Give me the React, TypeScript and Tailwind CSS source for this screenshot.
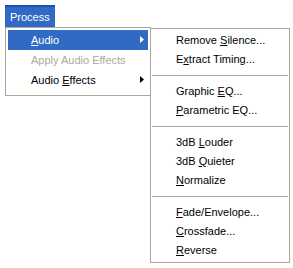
import React from "react";

const font = { fontFamily: '"Liberation Sans", Arial, sans-serif' };

function U({ children }: { children: React.ReactNode }) {
    return <span className="underline underline-offset-[1px]">{children}</span>;
}

function Arrow({ color }: { color: string }) {
    return (
        <svg width="4" height="7" viewBox="0 0 4 7" className="absolute right-[4px] top-[6px]">
            <path d="M0 0 L4 3.5 L0 7 Z" fill={color} />
        </svg>
    );
}

function Sep() {
    return (
        <div className="py-[6px] px-[1px]">
            <div className="h-px bg-[#aca899]"></div>
        </div>
    );
}

function Item({ children }: { children: React.ReactNode }) {
    return <div className="h-[19px] leading-[19px] pl-[25px] text-black">{children}</div>;
}

export default function App() {
    return (
        <div className="relative w-[293px] h-[268px] bg-white text-[11px]" style={font}>
            {/* menu bar */}
            <div className="pl-[5px] pt-[5px] flex">
                <div className="h-[22px] px-[5px] leading-[20px] bg-[#316ac5] border-t-2 border-[#1c4fb0] text-white">
                    Process
                </div>
            </div>

            {/* Process dropdown */}
            <div className="absolute left-[5px] top-[27px] w-[146px] h-[69px] bg-white border border-[#aca899] p-[2px]">
                <div className="relative h-[20px] leading-[20px] pl-[23px] bg-[#316ac5] text-white">
                    <U>A</U>udio
                    <Arrow color="#fff" />
                </div>
                <div className="h-[20px] leading-[20px] pl-[23px] text-[#aca899]">
                    Apply Audio Effects
                </div>
                <div className="relative h-[20px] leading-[20px] pl-[23px] text-black">
                    Audio <U>E</U>ffects
                    <Arrow color="#000" />
                </div>
            </div>

            {/* Audio submenu */}
            <div className="absolute left-[150px] top-[28px] w-[140px] h-[235px] bg-white border border-[#aca899] pt-[2px]">
                <Item>Remove <U>S</U>ilence...</Item>
                <Item>E<U>x</U>tract Timing...</Item>
                <Sep />
                <Item>Graphic <U>E</U>Q...</Item>
                <Item><U>P</U>arametric EQ...</Item>
                <Sep />
                <Item>3dB <U>L</U>ouder</Item>
                <Item>3dB <U>Q</U>uieter</Item>
                <Item><U>N</U>ormalize</Item>
                <Sep />
                <Item><U>F</U>ade/Envelope...</Item>
                <Item><U>C</U>rossfade...</Item>
                <Item><U>R</U>everse</Item>
            </div>
        </div>
    );
}
